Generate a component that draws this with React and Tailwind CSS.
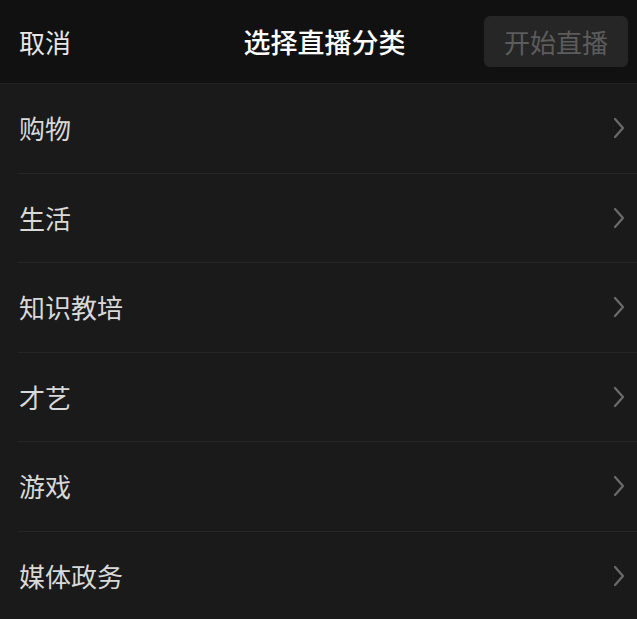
import React from "react";

const categories = ["购物", "生活", "知识教培", "才艺", "游戏", "媒体政务"];

const font = { fontFamily: '"Noto Sans CJK SC", "Noto Sans", sans-serif' };

const Chevron = () => (
  <svg width="14" height="24" viewBox="0 0 14 24" fill="none">
    <path
      d="M3 3 L11 12 L3 21"
      stroke="#6b6b6b"
      strokeWidth="2.2"
      strokeLinecap="round"
      strokeLinejoin="round"
    />
  </svg>
);

export default function App() {
  return (
    <div className="w-[637px] h-[619px] bg-[#1a1a1a] overflow-hidden" style={font}>
      {/* Header */}
      <div className="h-[84px] bg-[#111111] border-b border-[#222222] flex items-center justify-between pl-[19px] pr-[9px]">
        <span className="text-[26px] text-[#e6e6e6] leading-none">取消</span>
        <span className="text-[27px] font-medium text-white leading-none ml-[94px]">选择直播分类</span>
        <button className="w-[144px] h-[51px] rounded-[6px] bg-[#262626] text-[26px] text-[#5c5c5c] leading-none">
          开始直播
        </button>
      </div>

      {/* Category list */}
      <div className="flex flex-col">
        {categories.map((c, i) => (
          <div key={c} className="pl-[18px]">
            <div
              className={`h-[89.5px] flex items-center justify-between pr-[11px] ${
                i < categories.length - 1 ? "border-b border-[#262626]" : ""
              }`}
            >
              <span className="text-[26px] text-[#d9d9d9] leading-none pl-[1px]">{c}</span>
              <Chevron />
            </div>
          </div>
        ))}
      </div>
    </div>
  );
}
